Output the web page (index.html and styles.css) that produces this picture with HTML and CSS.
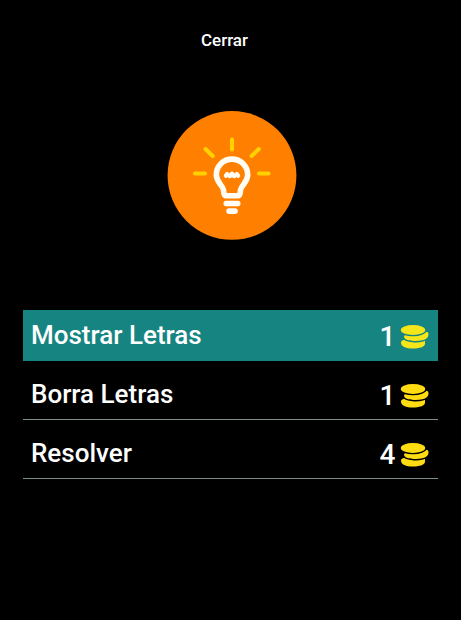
FILE: index.html
```html
<!DOCTYPE html>
<html lang="es">
<head>
<meta charset="utf-8">
<title>Pistas</title>
<link rel="stylesheet" href="styles.css">
</head>
<body>
<svg class="defs" width="0" height="0" aria-hidden="true">
  <symbol id="coins" viewBox="0 0 30 24">
    <path d="M1 17.500C1 15 5 14.500 13 15H25V19C24.500 22 19 23.500 13 23.500C6 23.500 1 21.500 1 17.500Z"/>
    <path class="rim" d="M4 11.500C4.500 9.500 9 9.500 14 9.500C20 9.500 25 7.500 27 6.800C29 7.500 29 11 27 13C24.500 15.400 19.500 16.200 14 16C8.500 15.800 4 14.500 4 11.500Z"/>
    <ellipse class="rim" cx="13" cy="5" rx="12.200" ry="4.900"/>
  </symbol>
</svg>
<main class="screen">
  <button class="close">Cerrar</button>
  <svg class="bulb" viewBox="167 110 130 130" aria-hidden="true">
    <circle cx="232" cy="175.4" r="64.4" fill="#ff8000"/>
    <g stroke="#ffd200" stroke-width="4" stroke-linecap="round">
      <path d="M232 139.5V149.5M205.500 149L212.700 156M258.800 149L251.600 156M195 173.500H205M259 173.500H268.500"/>
    </g>
    <path d="M223.500 190C222.500 184.500 216.300 182.500 216.300 174.800A15.700 15.700 0 0 1 247.700 174.800C247.700 182.500 241.500 184.500 240.500 190C240.200 193.500 240 195.800 237.500 195.800H226.500C224 195.800 223.800 193.500 223.500 190Z" fill="none" stroke="#fffdf4" stroke-width="5.600"/>
    <path d="M224.200 176.700Q224.500 172.600 227 172.600Q228.500 172.600 229.500 173.600Q230.500 172 232 172Q233.500 172 234.500 173.600Q235.500 172.600 237 172.600Q239.500 172.600 239.800 176.700L238 177.500L236.500 176.800L234.500 178L232 176.800L229.500 178L227.500 176.800L226 177.500Z" fill="#fffdf4" stroke="#fffdf4" stroke-width="1" stroke-linejoin="round"/>
    <rect x="223.500" y="200.800" width="17" height="5.400" rx="2.600" fill="#fffdf4"/>
    <rect x="226.300" y="208.300" width="11.500" height="5.700" rx="2.700" fill="#fffdf4"/>
  </svg>
  <ul class="options">
    <li class="option selected"><span class="label">Mostrar Letras</span><span class="cost">1</span><svg class="coins"><use href="#coins"/></svg></li>
    <li class="option"><span class="label">Borra Letras</span><span class="cost">1</span><svg class="coins"><use href="#coins"/></svg></li>
    <li class="option"><span class="label">Resolver</span><span class="cost">4</span><svg class="coins"><use href="#coins"/></svg></li>
  </ul>
</main>
</body>
</html>
```
FILE: styles.css
```css
* { box-sizing: border-box; }
body {
  margin: 0;
  background: #000;
  color: #fff;
  font-family: Roboto, "Liberation Sans", sans-serif;
  font-weight: 500;
}
.defs { display: block; }
.screen {
  display: flex;
  flex-direction: column;
  align-items: center;
  height: 620px;
  padding-top: 30px;
}
.close {
  border: 0;
  padding: 0;
  margin-right: 12px;
  background: none;
  color: inherit;
  font: inherit;
  font-size: 17px;
  line-height: 20px;
}
.bulb {
  width: 130px;
  height: 130px;
  margin: 60px 0 0 3px;
}
.options {
  list-style: none;
  width: 415px;
  margin: 70px 0 0;
  padding: 0;
}
.option {
  display: flex;
  align-items: center;
  height: 59px;
  padding: 8px 8px 0;
  border-bottom: 1px solid #7c8f8b;
}
.option.selected {
  height: 51px;
  padding: 0 8px 1px;
  border-bottom: 0;
  background: #168481;
  --gap: #168481;
}
.label {
  flex: 1;
  font-size: 26px;
  line-height: 50px;
}
.cost {
  width: 17px;
  margin-right: 4px;
  padding-top: 3px;
  font-size: 28px;
  line-height: 47px;
  text-align: center;
}
.coins {
  width: 30px;
  height: 24px;
  margin-top: 3px;
  fill: #ffdc12;
}
.selected .coins { fill: #f5e51b; }
.rim {
  stroke: var(--gap, #000);
  stroke-width: 2.8;
  paint-order: stroke;
}
```
